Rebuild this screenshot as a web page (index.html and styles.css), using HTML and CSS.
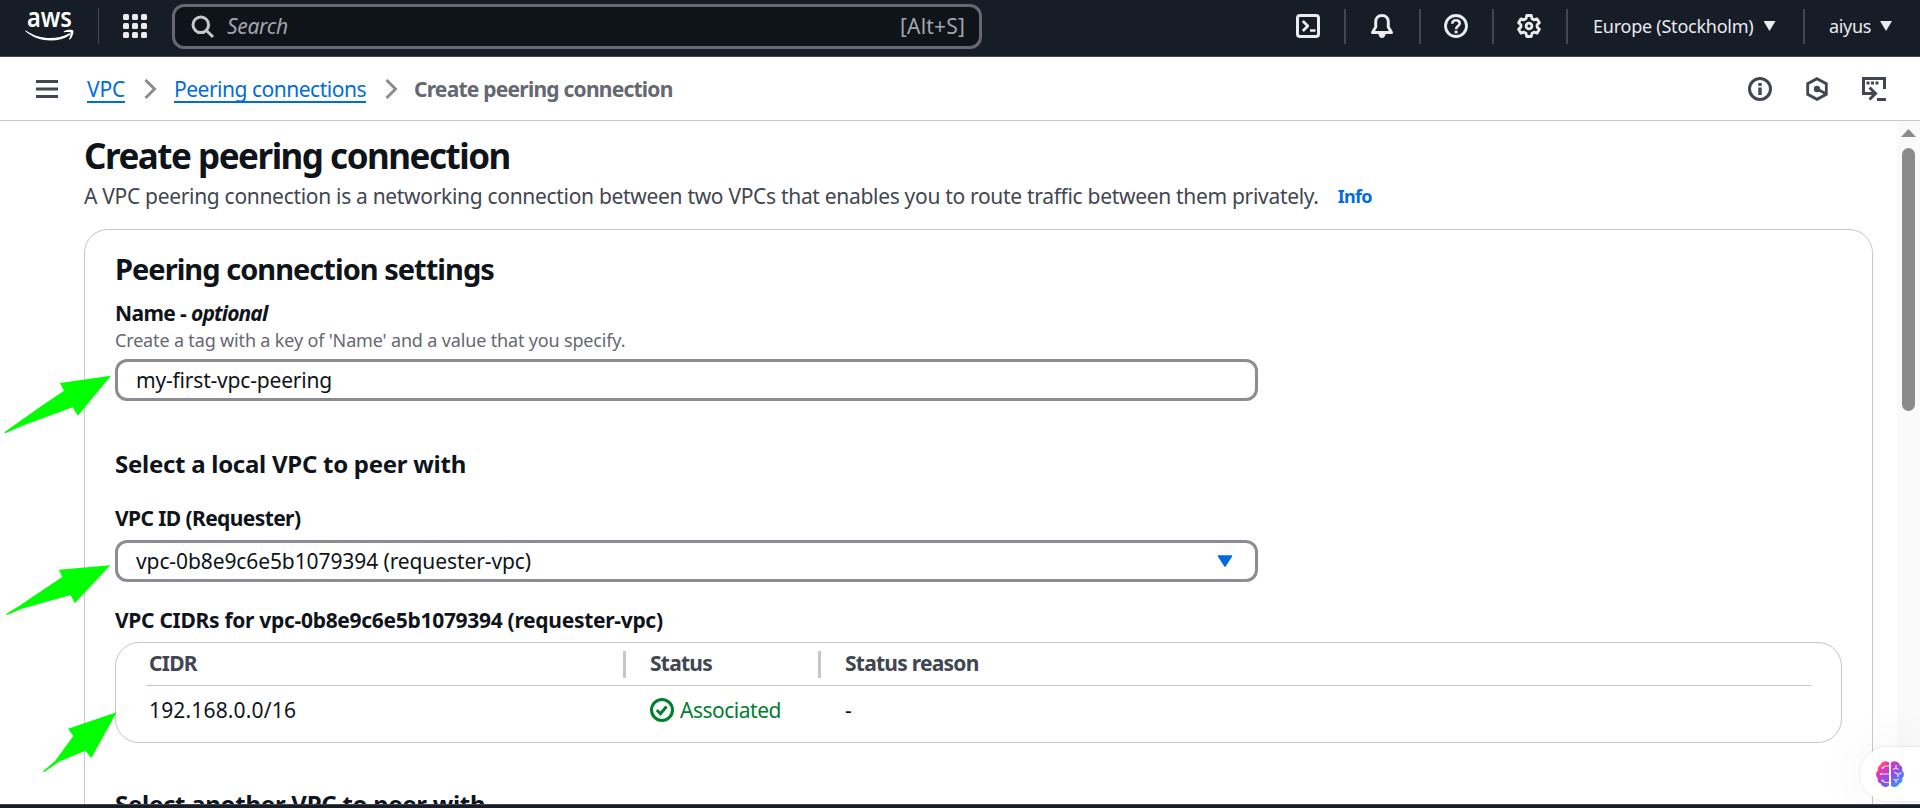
FILE: index.html
```html
<!DOCTYPE html>
<html lang="en">
<head>
<meta charset="utf-8">
<title>Create peering connection</title>
<link rel="stylesheet" href="styles.css">
</head>
<body>
<header class="topbar">
  <svg class="logo" width="50" height="42" viewBox="0 0 50 42">
    <text class="logo-text" x="2" y="24.5" textLength="45" lengthAdjust="spacingAndGlyphs">aws</text>
    <path d="M.8 28.500C14 37.500 31 38.500 44 31.500c1.200-.5 2 .5 1 1.400C33 41.200 13 40.500.4 29.300c-.4-.4 0-1 .4-.8z" fill="#fff"/>
    <path d="M39 29.300c3.500-2 8.500-1.800 9.200-.9.700 1.100-.3 6.500-3.300 9-.6.4-1 .1-.8-.4.8-1.900 2-5.500 1.500-6.300-.5-.8-4-.6-6.300-.4-.7 0-.8-.6-.3-1z" fill="#fff"/>
  </svg>
  <span class="rule rule-logo"></span>
  <svg class="apps" width="24" height="24" viewBox="0 0 24 24" fill="#ebebf0">
    <rect width="6" height="6" rx="1.500"/><rect x="9" width="6" height="6" rx="1.500"/><rect x="18" width="6" height="6" rx="1.500"/>
    <rect y="9" width="6" height="6" rx="1.500"/><rect x="9" y="9" width="6" height="6" rx="1.500"/><rect x="18" y="9" width="6" height="6" rx="1.500"/>
    <rect y="18" width="6" height="6" rx="1.500"/><rect x="9" y="18" width="6" height="6" rx="1.500"/><rect x="18" y="18" width="6" height="6" rx="1.500"/>
  </svg>
  <div class="search">
    <svg width="24" height="24" viewBox="0 0 24 24" fill="none" stroke="#c6c6cd" stroke-width="3"><circle cx="9.800" cy="9.800" r="7.800"/><path d="M15.200 15.200l6.800 6.800"/></svg>
    <span class="search-text">Search</span>
    <span class="search-key">[Alt+S]</span>
  </div>
  <nav class="tools">
    <div class="tool tool-shell"><svg width="24" height="24" viewBox="0 0 24 24" fill="none" stroke="#ebebf0" stroke-width="3" stroke-linejoin="round"><rect x="1.500" y="1.500" width="21" height="21" rx="2.500"/><path d="M6.800 7l5 5-5 5M14 16.500h5.500" stroke-width="2.700"/></svg></div>
    <div class="tool tool-bell"><svg width="24" height="24" viewBox="0 0 24 24" fill="none" stroke="#ebebf0" stroke-width="3" stroke-linejoin="round"><path d="M12 1.500c-3.900 0-6.300 2.800-6.300 6.500v5L2.500 18.500h19L18.300 13V8c0-3.700-2.400-6.500-6.300-6.500z"/><path d="M8.500 20h7c0 2.300-1.500 4-3.500 4s-3.500-1.700-3.500-4z" fill="#ebebf0" stroke="none"/></svg></div>
    <div class="tool tool-help"><svg width="24" height="24" viewBox="0 0 24 24" fill="none" stroke="#ebebf0"><circle cx="12" cy="12" r="10.500" stroke-width="2.800"/><path d="M8.300 9.800c0-2.200 1.500-3.600 3.700-3.600s3.700 1.400 3.700 3.200c0 2.600-3.600 2.700-3.600 5.800" stroke-width="2.600"/><path d="M10.600 16.700h3v2.600h-3z" fill="#ebebf0" stroke="none"/></svg></div>
    <div class="tool tool-gear"><svg width="24" height="24" viewBox="0 0 24 24" fill="none" stroke="#ebebf0" stroke-width="2.800" stroke-linejoin="round"><path d="M9.700 1.500h4.600l.7 3.200 2 1.100 3-1 2.400 4-2.300 2.100v2.200l2.300 2.100-2.400 4-3-1-2 1.100-.7 3.200H9.700L9 19.300l-2-1.100-3 1-2.400-4 2.300-2.100v-2.200L1.600 8.800l2.400-4 3 1 2-1.100z"/><circle cx="12" cy="12" r="2.900"/></svg></div>
    <div class="tool tool-region"><span>Europe (Stockholm)</span><i class="caret"></i></div>
    <div class="tool tool-user"><span>aiyus</span><i class="caret"></i></div>
  </nav>
</header>
<div class="crumbbar">
  <svg class="menu" width="22" height="18" viewBox="0 0 22 18" fill="#424650"><path d="M0 0h22v3H0zM0 7.500h22v3H0zM0 15h22v3H0z"/></svg>
  <a class="crumb crumb-vpc">VPC</a>
  <svg class="chev" width="13" height="20" viewBox="0 0 13 20" fill="none" stroke="#8c8c94" stroke-width="3"><path d="M1.500 1l9 9-9 9"/></svg>
  <a class="crumb crumb-list">Peering connections</a>
  <svg class="chev" width="13" height="20" viewBox="0 0 13 20" fill="none" stroke="#8c8c94" stroke-width="3"><path d="M1.500 1l9 9-9 9"/></svg>
  <span class="crumb-here">Create peering connection</span>
  <div class="crumb-tools">
    <svg width="24" height="24" viewBox="0 0 24 24" fill="none" stroke="#424650"><circle cx="12" cy="12" r="10.500" stroke-width="3"/><path d="M10.300 6h3.400v3h-3.400zM10.300 10.500h3.400v7.500h-3.400z" fill="#424650" stroke="none"/></svg>
    <svg width="24" height="24" viewBox="0 0 24 24" fill="none" stroke="#424650" stroke-width="2.800"><path d="M12 1.700l9.300 5v10.600l-9.300 5-9.300-5V6.700z"/><circle cx="12" cy="12" r="3.200" fill="#424650" stroke="none"/><path d="M12 12l8.500 4.500"/></svg>
    <svg width="24" height="24" viewBox="0 0 24 24" fill="none" stroke="#424650" stroke-width="3"><path d="M22.500 12V1.500h-21v15H12"/><path d="M7.500 10.500l6 6-6 6" /><path d="M15 22.500h9"/><path d="M4.500 6H18" stroke-dasharray="3 1.500"/></svg>
  </div>
</div>
<main class="view">
  <div class="page">
    <h1>Create peering connection</h1>
    <p class="desc"><span class="desc-text">A VPC peering connection is a networking connection between two VPCs that enables you to route traffic between them privately.</span><a class="info">Info</a></p>
    <section class="card">
      <h2>Peering connection settings</h2>
      <label class="label label-name"><span>Name - </span><em>optional</em></label>
      <p class="hint">Create a tag with a key of 'Name' and a value that you specify.</p>
      <div class="field"><span class="val-name">my-first-vpc-peering</span></div>
      <h3>Select a local VPC to peer with</h3>
      <label class="label label-id">VPC ID (Requester)</label>
      <div class="field"><span class="val-vpc">vpc-0b8e9c6e5b1079394 (requester-vpc)</span><svg width="16" height="12" viewBox="0 0 16 12"><path d="M1.500 1h13L8 11.200z" fill="#006ce0" stroke="#006ce0" stroke-width="1.500" stroke-linejoin="round"/></svg></div>
      <label class="label label-cidrs">VPC CIDRs for vpc-0b8e9c6e5b1079394 (requester-vpc)</label>
      <div class="table">
        <div class="row head"><span>CIDR</span><span>Status</span><span>Status reason</span></div>
        <div class="row body"><span class="ip">192.168.0.0/16</span><span class="ok"><svg width="24" height="24" viewBox="0 0 24 24" fill="none" stroke="#00802f" stroke-width="3"><circle cx="12" cy="12" r="10.500"/><path d="M6.800 12l3.700 3.700 6-7.200"/></svg>Associated</span><span>-</span></div>
      </div>
      <h3 class="next">Select another VPC to peer with</h3>
    </section>
  </div>
  <div class="scroll">
    <svg width="15" height="8" viewBox="0 0 15 8"><path d="M0 8L7.500 0 15 8z" fill="#8b8b8b"/></svg>
    <div class="thumb"></div>
  </div>
</main>
<footer class="bottombar"></footer>
<svg class="arrows" width="130" height="808" viewBox="0 0 130 808" fill="#0f0">
  <path d="M111 375.700L60 383l4 7.700L40 407 4.300 432.300l1 1L23 425.500 72.700 407.300l5 8.400z"/>
  <path d="M110.300 565.300L59 569.700l3.300 7.300L36 594.500 20 605.500 6 614l1 1 14.700-6.300L70.700 595l4 8.300z"/>
  <path d="M116.700 712.300L68 728.700l5.300 7.300L55 761 43 771.300l1 1 15-10.600 26.300-11 6 7.300z"/>
</svg>
<div class="assist">
  <svg width="28" height="26" viewBox="0 0 28 26">
    <defs><linearGradient id="g" x1="0" y1="0" x2="1" y2="1"><stop offset="0" stop-color="#ffa800"/><stop offset=".25" stop-color="#f52fa8"/><stop offset=".55" stop-color="#8b4df0"/><stop offset="1" stop-color="#16b0ff"/></linearGradient></defs>
    <path d="M13 1.500C10-.8 5 .3 4.300 4 1.700 5 1.200 8 2 9.500-.5 11-.5 15.500 1.700 17c-.5 3 1 5 3 5.500C6 26.300 11 27 13 24.500zM15 1.500C18-.8 23 .3 23.700 4c2.600 1 3.100 4 2.300 5.500 2.500 1.500 2.500 6 .3 7.500.5 3-1 5-3 5.500C22 26.300 17 27 15 24.500z" fill="url(#g)"/>
    <path d="M13 5H9L6.500 7M13 13H5M13 21.500H9l-2.500-2M20 4v3l-3 1.500M20 7l2.500 1.500M18.500 11l3.500 2.500 3.500-2M22 13.500V16M17.500 18l2.500 1.500 2.500-1.500M20 19.500V22" fill="none" stroke="#f3dcff" stroke-width="1.200"/>
    <circle cx="6.500" cy="7" r="1" fill="#fff"/><circle cx="4.700" cy="13" r="1" fill="#fff"/><circle cx="6.500" cy="19.500" r="1" fill="#fff"/>
  </svg>
</div>
</body>
</html>
```
FILE: styles.css
```css
* { box-sizing: border-box; }
body {
  margin: 0;
  height: 808px;
  display: flex;
  flex-direction: column;
  overflow: hidden;
  background: #fff;
  color: #0f141a;
  font-family: "Noto Sans", "Open Sans", sans-serif;
  font-size: 21px;
  line-height: 30px;
}
h1, h2, h3, p { margin: 0; }
svg { display: block; flex: none; }
span, a, label, h1, h2, h3 { white-space: nowrap; }

/* Top navigation */
.topbar {
  flex: none;
  height: 57px;
  display: flex;
  align-items: flex-start;
  background: #161d26;
  border-bottom: 1px solid #424650;
}
.logo { margin: 2px 0 0 25px; overflow: visible; }
.logo-text { font-size: 27px; font-weight: 600; fill: #fff; }
.rule-logo { width: 1px; height: 36px; margin: 8px 0 0 23px; background: #424650; }
.apps { margin: 14px 0 0 24px; }
.search {
  width: 810px;
  height: 45px;
  margin: 4px 0 0 25px;
  padding: 0 14px 0 16px;
  display: flex;
  align-items: center;
  border: 3px solid #656871;
  border-radius: 12px;
  background: #0f141a;
  color: #a4a4ad;
}
.search span { padding-bottom: 2px; }
.search-text { margin-left: 12px; font-style: italic; letter-spacing: -.3px; }
.search-key { margin-left: auto; letter-spacing: .17px; }
.tools { display: flex; height: 52px; align-items: center; margin-left: auto; color: #ebebf0; font-size: 18px; }
.tool { display: flex; align-items: center; height: 35px; border-left: 2px solid #424650; }
.tool span { padding-bottom: 1px; }
.tool-shell { width: 48px; border-left: 0; }
.tool-bell { width: 75px; padding-left: 24px; }
.tool-help { width: 73px; padding-left: 23px; }
.tool-gear { width: 74px; padding-left: 23px; }
.tool-region { width: 237px; padding-left: 25px; gap: 10px; letter-spacing: -.24px; }
.tool-user { width: 117px; padding-left: 24px; gap: 9px; letter-spacing: -.33px; }
.caret { width: 12px; height: 10px; background: #ebebf0; clip-path: polygon(0 0, 100% 0, 50% 100%); }

/* Breadcrumbs */
.crumbbar {
  flex: none;
  height: 64px;
  padding: 0 34px 0 36px;
  display: flex;
  align-items: center;
  border-bottom: 1px solid #c6c6cd;
}
.crumb { height: 28px; line-height: 28px; border-bottom: 2px solid #006ce0; color: #006ce0; }
.crumb-vpc { margin-left: 29px; letter-spacing: -.19px; }
.crumb-list { letter-spacing: -.49px; }
.chev { margin: 0 17px 0 19px; }
.crumb-here { margin-left: -1px; font-weight: 700; color: #656871; letter-spacing: -.77px; }
.crumb-tools { margin-left: auto; display: flex; gap: 33px; }

/* Page */
.view { flex: 1; min-height: 0; display: flex; overflow: hidden; }
.page { flex: 1; min-width: 0; padding: 13px 24px 0 84px; }
h1 { font-size: 35px; line-height: 44px; font-weight: 700; letter-spacing: -1.49px; }
h2 { font-size: 29px; line-height: 38px; font-weight: 700; letter-spacing: -.98px; }
h3 { margin-top: 48px; font-size: 24px; font-weight: 700; letter-spacing: -.27px; }
.desc { margin-top: 3px; display: flex; gap: 19px; color: #424650; }
.desc-text { letter-spacing: -.31px; }
.info { font-size: 18px; font-weight: 700; color: #006ce0; letter-spacing: -.73px; }
.card {
  margin-top: 18px;
  height: 640px;
  padding: 20px 30px 0;
  border: 1px solid #c6c6cd;
  border-radius: 24px;
}
.label { display: block; font-weight: 700; }
.label-name { margin-top: 10px; letter-spacing: -.6px; }
.label-name span { white-space: pre; }
.label-name em { letter-spacing: -.9px; }
.label-id { margin-top: 24px; letter-spacing: -.6px; }
.label-cidrs { margin-top: 23px; letter-spacing: -.3px; }
.hint { font-size: 18px; line-height: 24px; color: #656871; letter-spacing: -.16px; }
.field {
  width: 1143px;
  height: 42px;
  margin-top: 7px;
  padding: 0 22px 0 18px;
  display: flex;
  align-items: center;
  justify-content: space-between;
  border: 3px solid #8c8c94;
  border-radius: 12px;
}
.field span { padding-bottom: 1px; }
.val-name { letter-spacing: -.19px; }
.val-vpc { letter-spacing: -.1px; }
.table {
  height: 101px;
  margin-top: 7px;
  padding: 0 30px;
  border: 1px solid #c6c6cd;
  border-radius: 24px;
}
.row { display: grid; grid-template-columns: 477px 195px 1fr; }
.head {
  height: 43px;
  padding-top: 8px;
  border-bottom: 1px solid #c6c6cd;
  font-weight: 700;
  color: #424650;
  letter-spacing: -.76px;
}
.head span { height: 27px; padding-left: 24px; border-left: 3px solid #c6c6cd; line-height: 25px; }
.head span:first-child { padding-left: 3px; border-left: 0; }
.body { padding-top: 9px; }
.body span { padding-left: 27px; }
.body .ip { padding-left: 3px; letter-spacing: .16px; }
.body .ok { display: flex; align-items: center; gap: 6px; color: #00802f; letter-spacing: -.49px; }
.next { margin-top: 46px; }

/* Scrollbar */
.scroll { width: 23px; padding: 8px 4px 0; background: #fafafa; }
.thumb { width: 13px; height: 263px; margin: 11px 0 0 1px; border-radius: 7px; background: #8b8b8b; }
.bottombar { flex: none; height: 4px; background: #161d26; border-top: 1px solid #424650; }

/* Overlays */
.arrows { position: absolute; left: 0; top: 0; }
.assist {
  position: absolute;
  right: 0;
  top: 747px;
  width: 60px;
  height: 54px;
  padding: 14px 16px;
  border-radius: 27px 0 0 27px;
  background: #fff;
  box-shadow: 0 0 3px rgba(0,0,0,.12), 0 0 60px rgba(0,0,0,.06);
}
```
